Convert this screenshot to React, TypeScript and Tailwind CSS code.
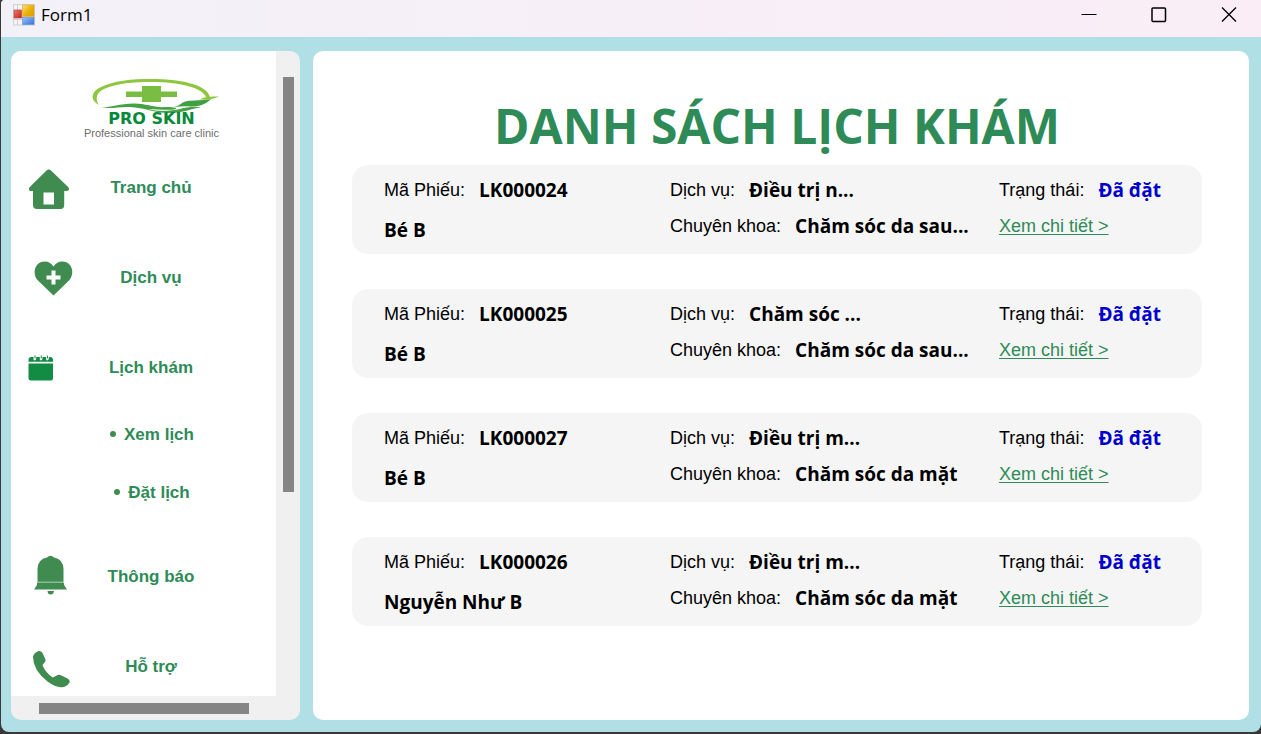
import type { ReactNode } from "react";

type Appointment = {
  code: string;
  patient: string;
  service: string;
  department: string;
  status: string;
};

const appointments: Appointment[] = [
  { code: "LK000024", patient: "Bé B", service: "Điều trị n...", department: "Chăm sóc da sau...", status: "Đã đặt" },
  { code: "LK000025", patient: "Bé B", service: "Chăm sóc ...", department: "Chăm sóc da sau...", status: "Đã đặt" },
  { code: "LK000027", patient: "Bé B", service: "Điều trị m...", department: "Chăm sóc da mặt", status: "Đã đặt" },
  { code: "LK000026", patient: "Nguyễn Như B", service: "Điều trị m...", department: "Chăm sóc da mặt", status: "Đã đặt" },
];

function FormIcon() {
  return (
    <svg width="22" height="22" viewBox="0 0 22 22" aria-hidden="true">
      <defs>
        <linearGradient id="gold" x1="0" y1="0" x2="1" y2="1">
          <stop offset="0" stopColor="#fbe08a" />
          <stop offset="0.5" stopColor="#edb20a" />
          <stop offset="1" stopColor="#d99a00" />
        </linearGradient>
        <linearGradient id="red" x1="0" y1="0" x2="1" y2="1">
          <stop offset="0" stopColor="#f0806c" />
          <stop offset="1" stopColor="#c42020" />
        </linearGradient>
        <linearGradient id="blue" x1="0" y1="0" x2="1" y2="1">
          <stop offset="0" stopColor="#9cc4fa" />
          <stop offset="1" stopColor="#2f6fdc" />
        </linearGradient>
      </defs>
      <rect x="0.5" y="0.5" width="21" height="20.5" fill="#f4f4f4" stroke="#d2d0d4" />
      <path d="M4.5 1v5M4.5 15v6M1 15.500h8" stroke="#d2d0d4" fill="none" />
      <rect x="9.500" y="1" width="11.500" height="11.500" fill="url(#gold)" stroke="#d9a92a" strokeWidth="0.6" />
      <rect x="1" y="6" width="7.500" height="8" fill="url(#red)" stroke="#b83a34" strokeWidth="0.6" />
      <rect x="9.500" y="13.500" width="11.500" height="7" fill="url(#blue)" stroke="#5a86d4" strokeWidth="0.6" />
    </svg>
  );
}

function Logo() {
  return (
    <svg width="160" height="64" viewBox="72 75 160 64" role="img" aria-label="Pro Skin">
      <path
        d="M99 105C91 101 90 93 99 88C113 80.500 132 79 152 79C178 79 207 84 210 97L206.500 98C203 87 178 82 152 82C133 82 117 83 104 89C96 93 95 99 99 105Z"
        fill="#8fc640"
      />
      <path d="M142 86h19v5.500h16v5.500h-16v5h-19v-5h-16v-5.500h16z" fill="#79bd43" />
      <path
        d="M101 107.500C112 107 119 104 134 103.500C147 103.500 154 108 166 107C173 107 180 108 174 109.500C166 110.500 157 109 148 109C158 112 171 111 180 109C187 107 194 106.500 201 107.500C190 108.500 184 113 170 113C154 113 144 107.500 130 107C119 106.500 112 109 101 107.500Z"
        fill="#45a244"
      />
      <path d="M174 107C183 105 179 101 194 100.500C201 100 207 100 211 99C206 104 199 107 190 106.500C184 106 180 107 174 107Z" fill="#3f9f42" />
      <path d="M200 99.500C204 96.500 210 96.500 219 96.500C214 99 209 100 200 99.500Z" fill="#8fc640" />
      <text x="151.500" y="124" textAnchor="middle" fill="#07893a" className="font-['DejaVu_Sans'] text-[16px] font-bold">
        PRO SKIN
      </text>
      <text x="151.500" y="137" textAnchor="middle" fill="#6d6d6d" className="font-['Liberation_Sans'] text-[11px] font-normal">
        Professional skin care clinic
      </text>
    </svg>
  );
}

const houseIcon = (
  <path
    fillRule="evenodd"
    d="M22.500 9.400Q24.800 7.400 27 9.400L44.400 26.200Q46.500 30 42 30H40.200V44Q40.200 48 36.500 48H13Q9 48 9 44V30H7Q3.500 29.500 5.600 26.200ZM19.500 31.500V43.500H30V31.500Z"
  />
);

const heartIcon = (
  <path
    fillRule="evenodd"
    d="M29.500 44.500L14 29.500C7.500 22.500 11 10.500 20.500 10.500C25 10.500 27.500 12.500 29.500 15.500C31.500 12.500 34 10.500 38.500 10.500C48 10.500 51.500 22.500 45 29.500ZM27.500 19.500V24.500H22.500V28.500H27.500V33.500H31.500V28.500H36.500V24.500H31.500V19.500Z"
  />
);

const calendarIcon = (
  <g fill="#138c43">
    <path d="M4.500 20.800V19Q4.500 16 7.500 16H9.500V18.500Q11 20.500 12.200 18V16H15.800V18.500Q17.300 20.500 18.500 18V16H22.100V18.500Q23.600 20.500 24.800 18V16H26Q29 16 29 19V20.800Z" />
    <path d="M4.500 22.500H29V37Q29 39.500 26.500 39.500H7Q4.500 39.500 4.500 37Z" />
    <path d="M11 14.500v3M17.200 14.500v3M23.400 14.500v3" stroke="#138c43" strokeWidth="1" />
  </g>
);

const bellIcon = (
  <>
    <path d="M23 7.500Q26.500 4 30 7.500Q39 9 39.500 19V31.500H13.500V19Q14 9 23 7.500Z" />
    <path d="M13 33H40V35L43 39.500H10L13 35Z" />
    <path d="M13.500 31H39.500V33.500H13.500Z" opacity="0.6" />
    <path d="M23.500 41H30Q29.500 44.500 26.500 44.500Q23.800 44.500 23.500 41Z" />
  </>
);

const phoneIcon = (
  <path d="M9 17Q9.500 13 14.500 11Q17 10.500 18.500 13L21.500 19.500Q22 21.500 20 23L18.500 25Q20.500 31.500 28.500 37.500L32 36Q34.500 34 37 35.200L43.500 38.500Q46.500 40.500 45.500 42.500Q42.500 47.500 37 47.300Q31 47 23.500 41.500Q9 30 9 17Z" />
);

function NavItem({ label, children }: { label: string; children: ReactNode }) {
  return (
    <a href="#" className="flex h-[90px] shrink-0 items-center pl-[13px]">
      <svg width="52" height="52" viewBox="0 0 52 52" fill="#3f8b50" aria-hidden="true">
        {children}
      </svg>
      <span className="w-[150px] pt-0.5 text-center">{label}</span>
    </a>
  );
}

function SubItem({ label }: { label: string }) {
  return (
    <a href="#" className="flex h-11 items-center justify-center gap-2">
      <span className="size-[6px] rounded-full bg-[#3f8b50]" />
      <span className="pt-0.5">{label}</span>
    </a>
  );
}

function Sidebar() {
  return (
    <aside className="flex w-[289px] shrink-0 flex-col overflow-hidden rounded-[10px] bg-[#f0f0f0]">
      <div className="flex min-h-0 flex-1">
        <nav className="flex min-h-0 flex-1 flex-col overflow-hidden bg-white font-['Liberation_Sans',sans-serif] text-[17px] font-bold text-[#2e8b57]">
          <div className="flex h-[91px] shrink-0 justify-center pt-6 pl-4">
            <Logo />
          </div>
          <NavItem label="Trang chủ">{houseIcon}</NavItem>
          <NavItem label="Dịch vụ">{heartIcon}</NavItem>
          <NavItem label="Lịch khám">{calendarIcon}</NavItem>
          <div className="ml-[66px] flex w-[150px] shrink-0 flex-col gap-3.5 pb-[17px]">
            <SubItem label="Xem lịch" />
            <SubItem label="Đặt lịch" />
          </div>
          <NavItem label="Thông báo">{bellIcon}</NavItem>
          <NavItem label="Hỗ trợ">{phoneIcon}</NavItem>
        </nav>
        <div className="flex w-6 flex-col items-center pt-[26px]">
          <div className="h-[67%] w-[11px] bg-[#858585]" />
        </div>
      </div>
      <div className="flex h-6 items-center pl-7">
        <div className="h-[11px] w-[210px] bg-[#858585]" />
      </div>
    </aside>
  );
}

function Field({ label, value, valueClass = "text-black" }: { label: string; value: string; valueClass?: string }) {
  return (
    <p className="flex h-9 items-center gap-3.5 whitespace-nowrap">
      <span>{label}</span>
      <strong className={`font-['Open_Sans',sans-serif] text-[19px] font-bold ${valueClass}`}>{value}</strong>
    </p>
  );
}

function AppointmentCard({ item }: { item: Appointment }) {
  return (
    <li className="grid h-[89px] grid-cols-[286fr_329fr_203fr] rounded-2xl bg-[#f5f5f5] pt-[7px] pl-8 font-['Liberation_Sans',sans-serif] text-[18px] text-black">
      <div>
        <Field label="Mã Phiếu:" value={item.code} />
        <p className="flex h-11 items-center font-['Open_Sans',sans-serif] text-[19px] font-bold">{item.patient}</p>
      </div>
      <div>
        <Field label="Dịch vụ:" value={item.service} />
        <Field label="Chuyên khoa:" value={item.department} />
      </div>
      <div>
        <Field label="Trạng thái:" value={item.status} valueClass="text-[#0000cd]" />
        <p className="flex h-9 items-center">
          <a href="#" className="text-[#2e8b57] underline underline-offset-2">
            Xem chi tiết &gt;
          </a>
        </p>
      </div>
    </li>
  );
}

function TitleBar() {
  return (
    <header className="flex h-[37px] shrink-0 items-center bg-linear-to-r from-[#f3f1f8] to-[#faedf6] pr-4 pb-2 pl-3">
      <FormIcon />
      <span className="ml-1.5 font-['Open_Sans',sans-serif] text-[17px] text-black">Form1</span>
      <div className="ml-auto flex gap-[38px]">
        <button type="button" aria-label="Minimize" className="flex size-8 items-center justify-center">
          <svg width="16" height="16" viewBox="0 0 16 16" stroke="#000" fill="none">
            <path d="M0.500 7.500h15" />
          </svg>
        </button>
        <button type="button" aria-label="Maximize" className="flex size-8 items-center justify-center">
          <svg width="16" height="16" viewBox="0 0 16 16" stroke="#000" strokeWidth="1.500" fill="none">
            <rect x="1" y="1" width="13.500" height="13.500" rx="1" />
          </svg>
        </button>
        <button type="button" aria-label="Close" className="flex size-8 items-center justify-center">
          <svg width="16" height="16" viewBox="0 0 16 16" stroke="#000" strokeWidth="1.300" fill="none">
            <path d="M1 0.500l14 14M15 0.500L1 14.500" />
          </svg>
        </button>
      </div>
    </header>
  );
}

export default function App() {
  return (
    <div className="h-screen bg-[#3a3838] pb-0.5 pl-px">
      <div className="flex h-full flex-col overflow-hidden rounded-tl-sm rounded-b-lg bg-[#b0e0e6]">
        <TitleBar />
        <div className="flex min-h-0 flex-1 gap-[13px] pt-3.5 pr-3 pb-3 pl-2.5">
          <Sidebar />
          <main className="min-w-0 flex-1 rounded-[10px] bg-white pt-10 pr-[47px] pl-[39px]">
            <h1 className="mb-1 flex h-[70px] items-center justify-center whitespace-nowrap font-['Open_Sans',sans-serif] text-[48px] leading-none font-bold text-[#2e8b57]">
              DANH SÁCH LỊCH KHÁM
            </h1>
            <ul className="flex flex-col gap-[35px]">
              {appointments.map((item) => (
                <AppointmentCard key={item.code} item={item} />
              ))}
            </ul>
          </main>
        </div>
      </div>
    </div>
  );
}
